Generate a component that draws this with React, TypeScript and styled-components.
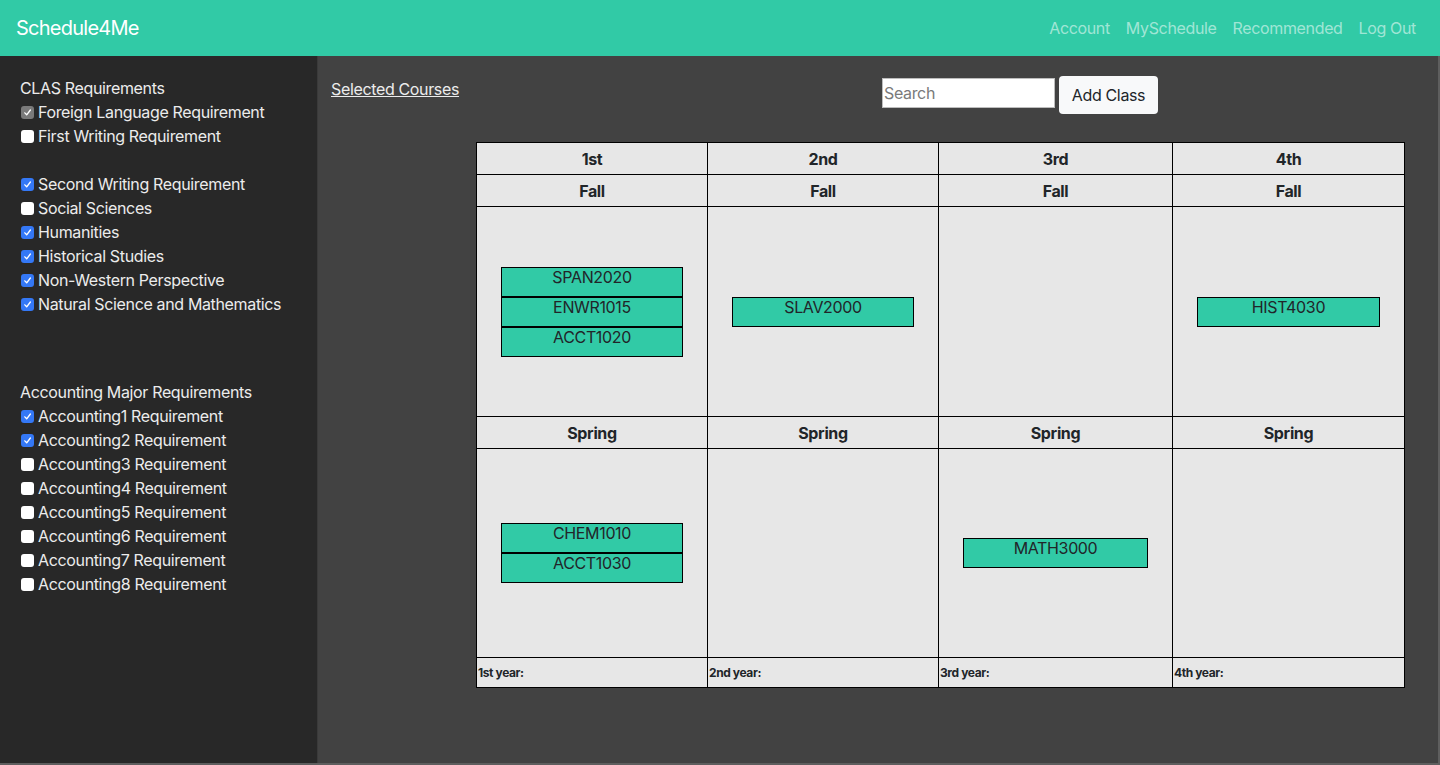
import React from "react";
import styled, { createGlobalStyle } from "styled-components";

const GlobalStyle = createGlobalStyle`
  html, body {
    margin: 0;
    padding: 0;
    background: #424242;
  }
  body {
    font-family: Inter, "Open Sans", "Liberation Sans", sans-serif;
    font-size: 16px;
    letter-spacing: -0.35px;
    color: #212529;
  }
  * {
    box-sizing: border-box;
  }
`;

type Requirement = { label: string; checked?: boolean; disabled?: boolean };

const clasTop: Requirement[] = [
  { label: "Foreign Language Requirement", checked: true, disabled: true },
  { label: "First Writing Requirement" },
];

const clasRest: Requirement[] = [
  { label: "Second Writing Requirement", checked: true },
  { label: "Social Sciences" },
  { label: "Humanities", checked: true },
  { label: "Historical Studies", checked: true },
  { label: "Non-Western Perspective", checked: true },
  { label: "Natural Science and Mathematics", checked: true },
];

const accounting: Requirement[] = [1, 2, 3, 4, 5, 6, 7, 8].map((n) => ({
  label: `Accounting${n} Requirement`,
  checked: n <= 2,
}));

const years = ["1st", "2nd", "3rd", "4th"];

const fall: string[][] = [
  ["SPAN2020", "ENWR1015", "ACCT1020"],
  ["SLAV2000"],
  [],
  ["HIST4030"],
];

const spring: string[][] = [["CHEM1010", "ACCT1030"], [], ["MATH3000"], []];

const CheckItem: React.FC<Requirement> = ({ label, checked, disabled }) => (
  <ItemRow>
    <Box checked={!!checked} disabled={!!disabled}>
      {checked ? (
        <svg width="9" height="9" viewBox="0 0 10 10">
          <path
            d="M2 5.4 L4.1 7.6 L8.2 2.2"
            fill="none"
            stroke="#fff"
            strokeWidth="1.5"
            strokeLinecap="round"
            strokeLinejoin="round"
          />
        </svg>
      ) : null}
    </Box>
    {label}
  </ItemRow>
);

const App: React.FC = () => {
  return (
    <>
      <GlobalStyle />
      <Page>
        <Navbar>
          <Brand>Schedule4Me</Brand>
          <NavLinks>
            <NavLink>Account</NavLink>
            <NavLink>MySchedule</NavLink>
            <NavLink>Recommended</NavLink>
            <NavLink>Log Out</NavLink>
          </NavLinks>
        </Navbar>

        <Body>
          <Sidebar>
            <Group gap={24}>
              <GroupTitle>CLAS Requirements</GroupTitle>
              {clasTop.map((r) => (
                <CheckItem key={r.label} {...r} />
              ))}
            </Group>
            <Group gap={64}>
              {clasRest.map((r) => (
                <CheckItem key={r.label} {...r} />
              ))}
            </Group>
            <Group gap={0}>
              <GroupTitle>Accounting Major Requirements</GroupTitle>
              {accounting.map((r) => (
                <CheckItem key={r.label} {...r} />
              ))}
            </Group>
          </Sidebar>

          <Main>
            <SelectedLink>Selected Courses</SelectedLink>
            <Content>
              <Toolbar>
                <SearchInput placeholder="Search" />
                <AddButton>Add Class</AddButton>
              </Toolbar>

              <Schedule>
                {years.map((y) => (
                  <HeadCell key={y}>{y}</HeadCell>
                ))}
                {years.map((y) => (
                  <HeadCell key={`f-${y}`}>Fall</HeadCell>
                ))}
                {fall.map((courses, i) => (
                  <TermCell key={`fc-${i}`}>
                    {courses.map((c) => (
                      <Course key={c}>{c}</Course>
                    ))}
                  </TermCell>
                ))}
                {years.map((y) => (
                  <HeadCell key={`s-${y}`}>Spring</HeadCell>
                ))}
                {spring.map((courses, i) => (
                  <TermCell key={`sc-${i}`}>
                    {courses.map((c) => (
                      <Course key={c}>{c}</Course>
                    ))}
                  </TermCell>
                ))}
                {years.map((y) => (
                  <FootCell key={`y-${y}`}>{y} year:</FootCell>
                ))}
              </Schedule>
            </Content>
          </Main>
        </Body>
      </Page>
    </>
  );
};

const Page = styled.div`
  display: flex;
  flex-direction: column;
  height: 765px;
  overflow: hidden;
`;

const Navbar = styled.nav`
  height: 56px;
  flex-shrink: 0;
  display: flex;
  align-items: center;
  justify-content: space-between;
  padding: 0 16px;
  background: #31caa6;
`;

const Brand = styled.div`
  color: #fff;
  font-size: 20px;
  line-height: 30px;
  letter-spacing: -0.75px;
`;

const NavLinks = styled.div`
  display: flex;
`;

const NavLink = styled.a`
  color: rgba(255, 255, 255, 0.55);
  font-size: 16px;
  line-height: 24px;
  padding: 8px;
  cursor: pointer;
`;

const Body = styled.div`
  flex: 1;
  display: flex;
  min-height: 0;
  border-right: 2px solid #5e5e5e;
  border-bottom: 2px solid #5e5e5e;
`;

const Sidebar = styled.aside`
  width: 318px;
  flex-shrink: 0;
  padding: 20px 20px;
  background: #282828;
  border-right: 1px solid #3a3a3a;
  color: #ececec;
`;

const Group = styled.div<{ gap: number }>`
  display: flex;
  flex-direction: column;
  margin-bottom: ${(p) => p.gap}px;
`;

const GroupTitle = styled.div`
  font-size: 16px;
  line-height: 24px;
`;

const ItemRow = styled.label`
  display: flex;
  align-items: center;
  font-size: 16px;
  line-height: 24px;
  white-space: nowrap;
`;

const Box = styled.span<{ checked: boolean; disabled: boolean }>`
  display: inline-flex;
  align-items: center;
  justify-content: center;
  width: 13px;
  height: 13px;
  margin: 1px 4px 0 1px;
  border-radius: 3px;
  background: ${(p) =>
    p.disabled ? "#7a7a7a" : p.checked ? "#3478f6" : "#ffffff"};
`;

const Main = styled.main`
  flex: 1;
  display: grid;
  grid-template-columns: 145px 929px;
  align-content: start;
  padding: 20px 0 0 13px;
`;

const SelectedLink = styled.a`
  color: #ececec;
  text-decoration: underline;
  font-size: 16px;
  line-height: 24px;
  margin-top: 1px;
  align-self: start;
  white-space: nowrap;
  cursor: pointer;
`;

const Content = styled.div`
  display: flex;
  flex-direction: column;
`;

const Toolbar = styled.div`
  display: flex;
  align-items: flex-start;
  gap: 4px;
  height: 38px;
  margin-left: 406px;
  margin-bottom: 28px;
`;

const SearchInput = styled.input`
  width: 173px;
  height: 30px;
  margin-top: 2px;
  padding: 1px 1px;
  border: 1px solid #bdbdbd;
  background: #fff;
  font-family: inherit;
  font-size: 16px;
  letter-spacing: -0.35px;
  color: #212529;

  &::placeholder {
    color: #7a7a7a;
  }
`;

const AddButton = styled.button`
  height: 38px;
  width: 99px;
  padding: 6px 0;
  border: none;
  border-radius: 4px;
  background: #f8f9fa;
  color: #212529;
  font-family: inherit;
  font-size: 16px;
  letter-spacing: -0.35px;
  line-height: 24px;
  white-space: nowrap;
  cursor: pointer;
`;

const Schedule = styled.div`
  display: grid;
  grid-template-columns: 230px 230px 233px 231px;
  grid-template-rows: 31px 31px 209px 31px 208px 29px;
  gap: 1px;
  padding: 1px;
  background: #000;
  width: 929px;
`;

const HeadCell = styled.div`
  display: flex;
  align-items: center;
  justify-content: center;
  background: #e7e7e7;
  font-weight: 700;
  font-size: 16px;
`;

const TermCell = styled.div`
  display: flex;
  flex-direction: column;
  align-items: center;
  justify-content: center;
  background: #e7e7e7;
`;

const Course = styled.div`
  width: 79%;
  height: 30px;
  border: 1px solid #000;
  background: #31caa6;
  text-align: center;
  font-size: 16px;
  line-height: 19px;
  color: #212529;
`;

const FootCell = styled.div`
  display: flex;
  align-items: center;
  padding-left: 1px;
  background: #e7e7e7;
  font-size: 12px;
  font-weight: 700;
  letter-spacing: -0.4px;
`;

export default App;
